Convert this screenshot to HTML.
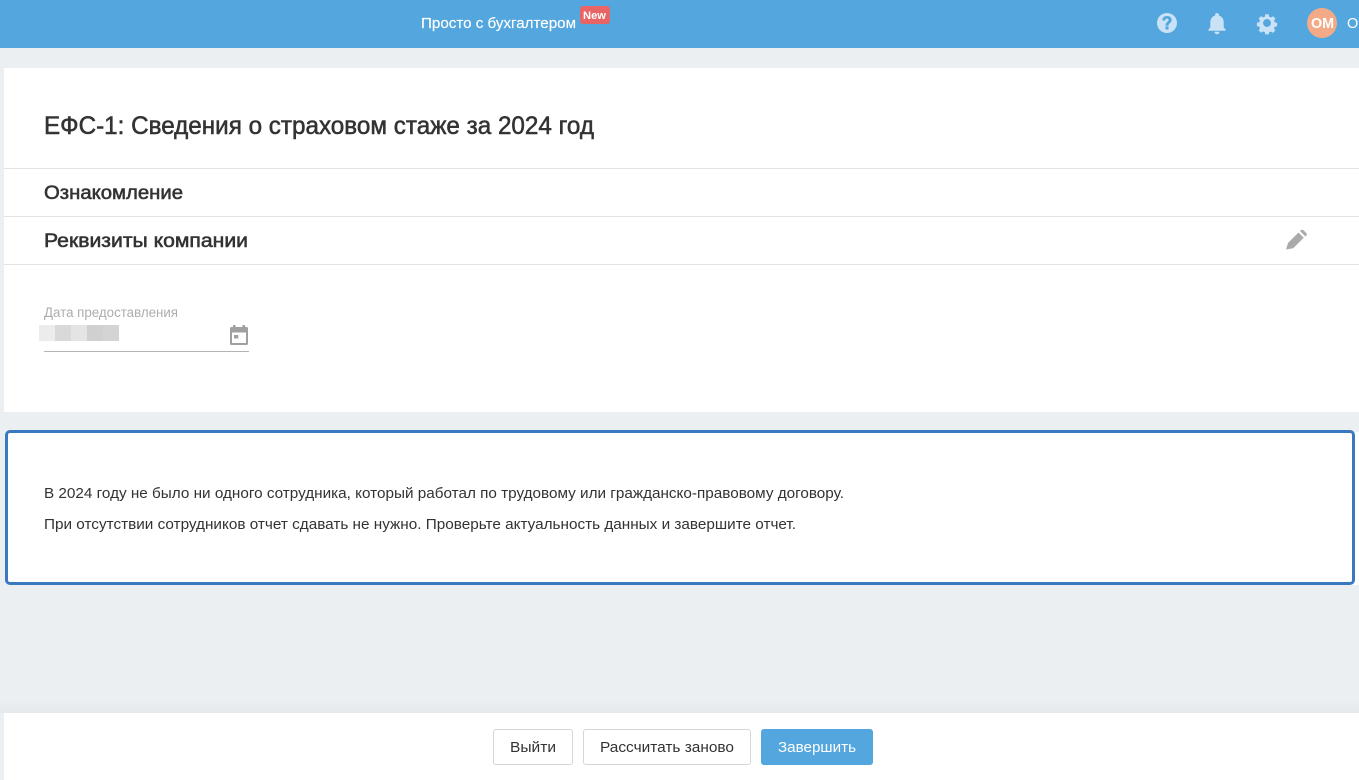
<!DOCTYPE html>
<html lang="ru"><head><meta charset="utf-8"><title>ЕФС-1</title>
<style>
html,body{margin:0;padding:0;width:1359px;height:780px;overflow:hidden;background:#ebeff2}
div,svg{position:absolute;box-sizing:border-box}
svg text{font-family:"Liberation Sans",Arial,sans-serif}
.m{stroke:currentColor;stroke-width:.55px}
.s{stroke:currentColor;stroke-width:.15px}
</style></head><body>
<div style="left:0;top:0;width:1359px;height:48px;background:#54a6de"></div>
<div style="left:580px;top:6px;width:30px;height:18px;background:#e96464;border-radius:3px"></div>
<div style="left:4px;top:68px;width:1355px;height:344px;background:#fff"></div>
<div style="left:4px;top:168px;width:1355px;height:1px;background:#e4e4e4"></div>
<div style="left:4px;top:216px;width:1355px;height:1px;background:#e4e4e4"></div>
<div style="left:4px;top:264px;width:1355px;height:1px;background:#e4e4e4"></div>
<div style="left:39px;top:325px;width:16px;height:16px;background:#ececec"></div>
<div style="left:55px;top:325px;width:16px;height:16px;background:#d9d9d9"></div>
<div style="left:71px;top:325px;width:16px;height:16px;background:#e4e4e4"></div>
<div style="left:87px;top:325px;width:16px;height:16px;background:#d0d0d0"></div>
<div style="left:103px;top:325px;width:16px;height:16px;background:#d4d4d4"></div>
<div style="left:44px;top:351px;width:205px;height:1px;background:#b4b4b4"></div>
<div style="left:1350px;top:432px;width:9px;height:153px;background:#fff"></div>
<div style="left:5px;top:430px;width:1350px;height:155px;background:#fff;border:3px solid #3a78bf;border-radius:5px"></div>
<div style="left:0;top:700px;width:1359px;height:13px;background:linear-gradient(#ebeff2,#e6e9ec)"></div>
<div style="left:4px;top:713px;width:1355px;height:67px;background:#fff"></div>
<div style="left:493px;top:729px;width:80px;height:36px;background:#fff;border:1px solid #d6d6d6;border-radius:3px"></div>
<div style="left:583px;top:729px;width:168px;height:36px;background:#fff;border:1px solid #d6d6d6;border-radius:3px"></div>
<div style="left:761px;top:729px;width:112px;height:36px;background:#54a6de;border-radius:3px"></div>
<div style="left:1307px;top:8px;width:30px;height:30px;border-radius:50%;background:#f2aa87"></div>
<svg width="1359" height="780" viewBox="0 0 1359 780" style="left:0;top:0">
<g fill="#fff" color="#fff">
<text class="s" x="421" y="28" font-size="15" textLength="155" lengthAdjust="spacingAndGlyphs">Просто с бухгалтером</text>
<text x="583" y="19" font-size="11" font-weight="700" textLength="23" lengthAdjust="spacingAndGlyphs">New</text>
<text x="1311" y="28" font-size="15" font-weight="700" textLength="23" lengthAdjust="spacingAndGlyphs">OM</text>
<text x="1347" y="28" font-size="14.500">О</text>
</g>
<g fill="#c9e2f5">
<path fill-rule="evenodd" d="M1167 13a10 10 0 1 0 0 20a10 10 0 0 0 0-20zM1165.500 26.500h3v3h-3zM1162.300 20.500c0-2.800 2-4.500 4.700-4.500c2.800 0 4.700 1.600 4.700 3.900c0 3.200-3.200 3.300-3.200 5.800h-3c0-3.800 3.100-3.800 3.100-5.700c0-1-.7-1.500-1.600-1.500c-1.100 0-1.700.8-1.700 2z"/>
<path d="M1217 13a1.900 1.900 0 0 0-1.900 1.900v.6c-3 .9-4.800 3.500-4.800 6.700v5.300l-1.800 1.900v1.300h17v-1.300l-1.800-1.900v-5.300c0-3.200-1.800-5.800-4.800-6.700v-.6a1.900 1.900 0 0 0-1.900-1.900zM1214.500 31.800a2.500 2.500 0 0 0 5 0z"/>
<path fill-rule="evenodd" transform="translate(1267 23) scale(.84) translate(-1267 -23.400)" d="M1265 13h4l.6 2.900c.7.2 1.400.5 2 .9l2.600-1.500l2.800 2.800l-1.600 2.500c.4.6.7 1.300.9 2l2.700.6v4l-2.800.6c-.2.7-.5 1.400-.9 2l1.600 2.500l-2.800 2.800l-2.500-1.600c-.6.4-1.300.7-2 .9l-.6 2.600h-4l-.6-2.700c-.7-.2-1.400-.5-2-.9l-2.500 1.600l-2.800-2.800l1.600-2.500c-.4-.6-.7-1.300-.9-2l-2.800-.6v-4l2.800-.6c.2-.7.5-1.400.9-2l-1.600-2.500l2.800-2.800l2.600 1.500c.6-.4 1.300-.7 2-.9zM1267 18.700a4.700 4.700 0 1 0 0 9.400a4.700 4.700 0 0 0 0-9.400z"/>
</g>
<g fill="#333" color="#333">
<text class="m" x="44" y="134" font-size="25" textLength="550" lengthAdjust="spacingAndGlyphs">ЕФС-1: Сведения о страховом стаже за 2024 год</text>
<text class="m" x="44" y="199" font-size="19" textLength="139" lengthAdjust="spacingAndGlyphs">Ознакомление</text>
<text class="m" x="44" y="247" font-size="19" textLength="204" lengthAdjust="spacingAndGlyphs">Реквизиты компании</text>
<text x="44" y="498" font-size="14.500" textLength="800" lengthAdjust="spacingAndGlyphs">В 2024 году не было ни одного сотрудника, который работал по трудовому или гражданско-правовому договору.</text>
<text x="44" y="529" font-size="14.500" textLength="752" lengthAdjust="spacingAndGlyphs">При отсутствии сотрудников отчет сдавать не нужно. Проверьте актуальность данных и завершите отчет.</text>
<text x="510" y="752" font-size="15" textLength="46" lengthAdjust="spacingAndGlyphs">Выйти</text>
<text x="600" y="752" font-size="15" textLength="134" lengthAdjust="spacingAndGlyphs">Рассчитать заново</text>
</g>
<text x="778" y="752" font-size="15" fill="#fff" textLength="78" lengthAdjust="spacingAndGlyphs">Завершить</text>
<text x="44" y="317" font-size="13.500" fill="#adadad" textLength="134" lengthAdjust="spacingAndGlyphs">Дата предоставления</text>
<path fill="#aaa" d="M1286 249.500l2-6.500l10.500-10.500l5.200 5.200l-10.500 10.500zM1300 231l.8-.7c.8-.8 1.900-.8 2.700 0l2.700 2.700c.8.800.8 1.900 0 2.700l-.8.800z"/>
<path fill="#a0a0a0" fill-rule="evenodd" d="M233 325h2.500v2h7v-2h2.500v2h1.500c1 0 1.500.6 1.500 1.500v15c0 1-.6 1.500-1.500 1.500h-15c-1 0-1.500-.6-1.500-1.500v-15c0-1 .6-1.500 1.500-1.500h1.500zM232 332.500v10.500h14v-10.500zM234 335h4.300v3.500h-4.300z"/>
</svg>
</body></html>
